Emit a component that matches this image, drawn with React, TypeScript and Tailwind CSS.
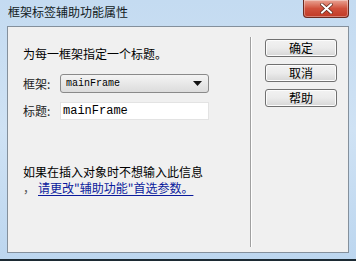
const cjk = "font-['Noto_Sans_CJK_SC','Noto_Sans',sans-serif]";
const mono = "font-['Liberation_Mono','Courier_New',monospace]";

function DialogButton({ label }: { label: string }) {
  return (
    <button className="flex h-[18px] w-[72px] items-center justify-center rounded-[3px] border border-[#707070] bg-gradient-to-b from-[#f2f2f2] via-[#ebebeb] to-[#d6d6d6] text-[12px] leading-none text-black shadow-[inset_0_0_0_1px_#fcfcfc]">
      {label}
    </button>
  );
}

function CloseButton() {
  return (
    <div className="flex h-[18px] w-[46px] items-center justify-center rounded-b-[4px] border border-t-0 border-[#6b2a20] bg-gradient-to-b from-[#e8a394] via-[#d0503c] to-[#c03a26] shadow-[inset_0_0_0_1px_rgba(255,255,255,0.35)]">
      <svg width="13" height="11" viewBox="0 0 13 11">
        <path
          d="M2 1.5 L11 9.5 M11 1.5 L2 9.5"
          stroke="#5a2418"
          strokeWidth="3.4"
          strokeLinecap="square"
        />
        <path
          d="M2 1.5 L11 9.5 M11 1.5 L2 9.5"
          stroke="#ffffff"
          strokeWidth="2"
          strokeLinecap="square"
        />
      </svg>
    </div>
  );
}

export default function App() {
  return (
    <div
      className={`${cjk} flex h-[261px] w-[356px] flex-col overflow-hidden bg-gradient-to-b from-[#c4dbf1] via-[#cfe2f4] to-[#bcd6ef] text-[12px] text-black`}
    >
      <div className="flex h-[26px] shrink-0 items-start justify-between pl-[8px] pr-[7px]">
        <span className="mt-[4px] text-[12px] leading-[16px] text-[#121a22]">框架标签辅助功能属性</span>
        <CloseButton />
      </div>

      <div className="mx-[7px] flex h-[227px] shrink-0 border border-[#84909c] bg-[#f0f0f0]">
        <div className="flex w-[242px] flex-col pl-[15px] pt-[19px]">
          <p className="leading-[16px]">为每一框架指定一个标题。</p>

          <div className="mt-[12px] flex items-center">
            <span className="w-[37px] leading-[16px] text-[#222]">框架:</span>
            <div className="flex h-[19px] w-[149px] items-center justify-between rounded-[3px] border border-[#8a8a8a] bg-gradient-to-b from-[#f4f4f4] to-[#dcdcdc] pl-[5px] pr-[6px]">
              <span className={`${mono} text-[10px] leading-none`}>mainFrame</span>
              <svg width="9" height="5" viewBox="0 0 9 5">
                <path d="M0 0 H9 L4.5 5 Z" fill="#111" />
              </svg>
            </div>
          </div>

          <div className="mt-[9px] flex items-center">
            <span className="w-[37px] leading-[16px] text-[#222]">标题:</span>
            <div className="flex h-[18px] w-[149px] items-center border border-[#e3e3e3] bg-white pl-[2px]">
              <span className={`${mono} text-[12px] leading-none`}>mainFrame</span>
            </div>
          </div>

          <p className="mt-[44px] leading-[16px]">如果在插入对象时不想输入此信息</p>
          <p className="leading-[16px]">
            <span className="mr-[3px] text-[#555]">，</span>
            <a className="text-[#0a1a9c] underline underline-offset-2">请更改"辅助功能"首选参数。</a>
          </p>
        </div>

        <div className="mb-[5px] mt-[10px] w-px bg-[#a0a0a0] shadow-[1px_0_0_#ffffff]" />

        <div className="flex flex-col gap-[7px] pl-[14px] pt-[12px]">
          <DialogButton label="确定" />
          <DialogButton label="取消" />
          <DialogButton label="帮助" />
        </div>
      </div>

      <div className="flex-1" />
      <div className="h-[2px] shrink-0 bg-[#1c2a33]" />
    </div>
  );
}
